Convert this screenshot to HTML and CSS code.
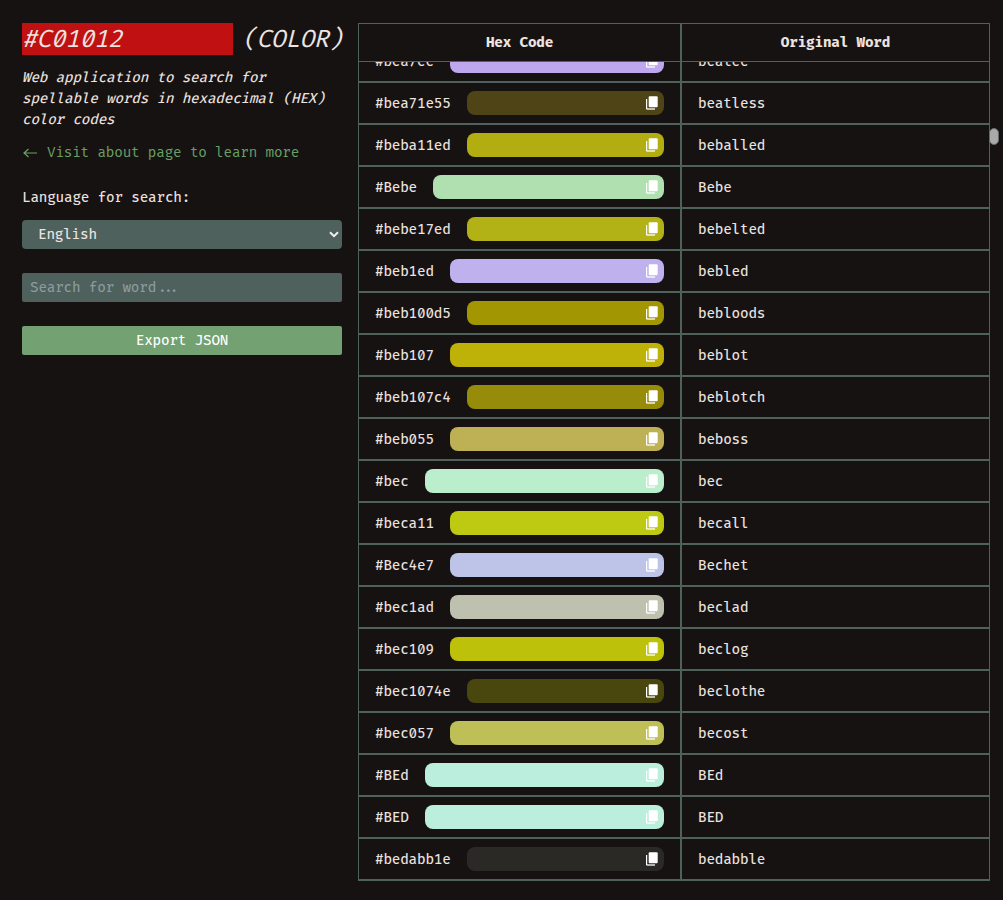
FILE: index.html
```html
<!DOCTYPE html>
<html lang="en">
<head>
<meta charset="utf-8">
<title>#C01012 (COLOR)</title>
<link rel="stylesheet" href="styles.css">
</head>
<body>
<div class="app">
  <aside class="sidebar">
    <h1 class="title"><span class="title-hex">#C01012</span><span class="title-word">(COLOR)</span></h1>
    <p class="intro">Web application to search for spellable words in hexadecimal (HEX) color codes</p>
    <a class="about"><svg class="arrow" viewBox="0 0 16 12"><path d="M15 6H2M6.5 2 2 6l4.500 4"/></svg><span>Visit about page to learn more</span></a>
    <label class="label">Language for search:</label>
    <div class="field select"><span>English</span><svg class="chevron" viewBox="0 0 10 7"><path d="M1 1.200l4 4 4-4"/></svg></div>
    <div class="field search">Search for word<span class="dots">...</span></div>
    <button class="export">Export JSON</button>
  </aside>
  <main class="table">
    <div class="head"><div class="cell">Hex Code</div><div class="cell">Original Word</div></div>
    <div class="body"><div class="rows" id="rows"></div></div>
    <div class="thumb"></div>
  </main>
</div>
<script src="app.js"></script>
</body>
</html>
```
FILE: styles.css
```css
* { box-sizing: border-box; }
body {
  margin: 0;
  height: 900px;
  overflow: hidden;
  background: #171212;
  color: #ece4e0;
  font: 450 14px/21px "Fira Code", "DejaVu Sans Mono", monospace;
  letter-spacing: -.21px;
}
.app { display: flex; gap: 16px; padding: 23px 13px 19px 22px; }
.sidebar { flex: none; width: 320px; display: flex; flex-direction: column; white-space: nowrap; }
.title {
  display: flex;
  gap: 9px;
  height: 32px;
  margin: 0;
  font-size: 24px;
  font-weight: 400;
  font-style: italic;
  line-height: 34px;
  letter-spacing: -.42px;
}
.title-hex { flex: none; width: 211px; height: 32px; background: #c01012; }
.intro { margin: 12px 0 0; white-space: normal; font-style: italic; }
.about { display: flex; align-items: center; gap: 9px; margin-top: 12px; color: #68a064; font-weight: 400; }
.arrow { width: 16px; height: 12px; fill: none; stroke: currentColor; stroke-width: 1.2; }
.label { margin-top: 24px; }
.field { display: flex; align-items: center; height: 29px; background: #4e615c; }
.select { margin-top: 12px; padding: 0 3px 0 16px; justify-content: space-between; border-radius: 4px; }
.chevron { width: 10px; height: 7px; fill: none; stroke: #f4eeee; stroke-width: 2; }
.search { margin-top: 24px; padding-left: 8px; border-radius: 2px; color: #8b9b9f; }
.dots { margin-left: 2px; letter-spacing: -2.800px; }
.export {
  height: 29px;
  margin-top: 24px;
  padding: 0;
  border: 0;
  border-radius: 2px;
  background: #73a171;
  color: #fff;
  font: inherit;
  letter-spacing: inherit;
}
.table { position: relative; flex: none; width: 632px; }
.head, .row { display: grid; grid-template-columns: 323px 309px; }
.cell { border: 1px solid #4e615c; }
.head .cell { height: 39px; line-height: 38px; font-weight: 700; text-align: center; }
.body { height: 819px; overflow: hidden; border-bottom: 1px solid #4e615c; }
.rows { margin-top: -22px; }
.row .cell { display: flex; align-items: center; gap: 16px; height: 42px; padding: 0 16px; }
.swatch { flex: 1; display: flex; align-items: center; justify-content: flex-end; height: 24px; padding-right: 6px; border-radius: 8px; }
.copy { width: 12px; height: 14px; fill: #fff; }
.copy-back { opacity: .65; }
.thumb {
  position: absolute;
  left: 631px;
  top: 105px;
  width: 10px;
  height: 17px;
  border: 1px solid #606b70;
  border-radius: 5px;
  background: #aaa8a8;
}
```
FILE: app.js
```js
const entries = [
  ["bea7ee", "beatee"], ["bea71e55", "beatless"], ["beba11ed", "beballed"], ["Bebe", "Bebe"],
  ["bebe17ed", "bebelted"], ["beb1ed", "bebled"], ["beb100d5", "bebloods"], ["beb107", "beblot"],
  ["beb107c4", "beblotch"], ["beb055", "beboss"], ["bec", "bec"], ["beca11", "becall"],
  ["Bec4e7", "Bechet"], ["bec1ad", "beclad"], ["bec109", "beclog"], ["bec1074e", "beclothe"],
  ["bec057", "becost"], ["BEd", "BEd"], ["BED", "BED"], ["bedabb1e", "bedabble"]
];
const icon = '<svg class="copy" viewBox="0 0 12 14"><path class="copy-back" d="M1 12h8v2H1.500L1 13.500z"/><path d="M0 3h1.200v10.500H.5L0 13z"/><rect x="2.700" y=".3" width="9" height="11" rx="1"/></svg>';
document.getElementById("rows").innerHTML = entries.map(([hex, word]) =>
  `<div class="row"><div class="cell"><span>#${hex}</span><div class="swatch" style="background:#${hex}">${icon}</div></div><div class="cell"><span>${word}</span></div></div>`
).join("");
```
